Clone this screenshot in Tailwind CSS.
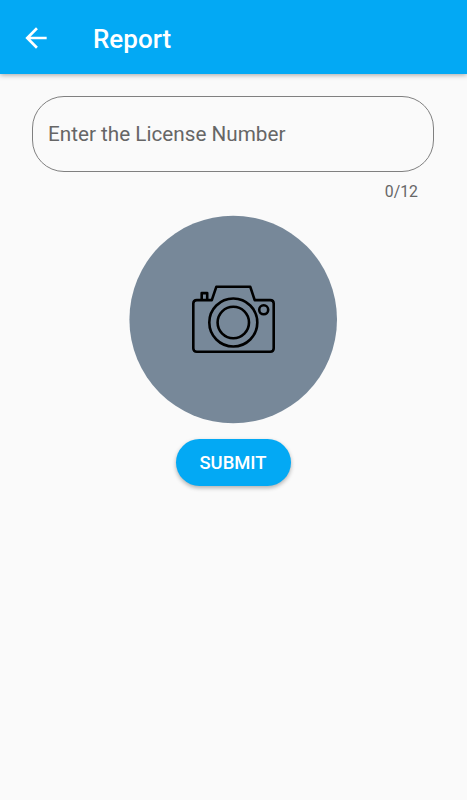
<!DOCTYPE html>
<html lang="en">
<head>
    <meta charset="UTF-8">
    <meta name="viewport" content="width=device-width, initial-scale=1.0">
    <title>Report</title>
    <script src="https://cdn.jsdelivr.net/npm/@tailwindcss/browser@4"></script>
</head>
<body class="bg-[#fafafa] font-['Roboto',sans-serif] h-screen overflow-hidden">
    <!-- App bar -->
    <header class="bg-[#03a9f4] h-[74px] flex items-center pl-6 pt-[3px] shadow-[0_1px_5px_rgba(0,0,0,0.35)]">
        <button class="w-6 h-8 mb-[2px] flex items-center justify-center" aria-label="Back">
            <svg class="w-8 h-8 shrink-0" viewBox="0 0 24 24" fill="#fff"><path d="M20 11H7.83l5.59-5.59L12 4l-8 8 8 8 1.41-1.41L7.83 13H20v-2z"/></svg>
        </button>
        <h1 class="ml-[45px] text-white text-[26px] leading-8 font-medium">Report</h1>
    </header>

    <!-- Report form -->
    <main class="flex flex-col items-center pt-[22px] pr-px">
        <div class="w-[402px]">
            <input type="text" maxlength="12" placeholder="Enter the License Number" class="block w-full h-[76px] border border-[#808080] rounded-[32px] px-[15px] text-[20.7px] placeholder:text-[#666666]">
            <p class="text-right pr-4 mt-[10px] text-[15.8px] leading-5 text-[#666666]">0/12</p>
        </div>
        <!-- Photo picker -->
        <button class="mt-[13px]" aria-label="Take a photo">
            <svg class="block w-[208px] h-[209px]" viewBox="0 0 208 209" fill="none" stroke="#000" stroke-width="2.6" stroke-linejoin="round">
                <circle cx="104.200" cy="104.500" r="103.800" fill="#778899" stroke="none"/>
                <g transform="translate(62 69.300)">
                    <path d="M5.800 15.800H20.800L25.300 2.500H59.300L63.700 15.800H79.200q3.500 0 3.500 3.500V64q0 3.500-3.500 3.500H5.800q-3.500 0-3.500-3.500V19.300q0-3.500 3.500-3.500z"/>
                    <path d="M10.700 15.800v-7h5.500v7"/>
                    <circle cx="42.300" cy="38.200" r="24"/>
                    <circle cx="42.300" cy="38.200" r="15.700"/>
                    <circle cx="72.700" cy="25.500" r="4.500"/>
                </g>
            </svg>
        </button>
        <button class="mt-[15px] w-[115px] h-[47px] rounded-full bg-[#03a9f4] text-white text-[18.4px] font-medium shadow-[0_2px_4px_rgba(0,0,0,0.3)]">SUBMIT</button>
    </main>
</body>
</html>
